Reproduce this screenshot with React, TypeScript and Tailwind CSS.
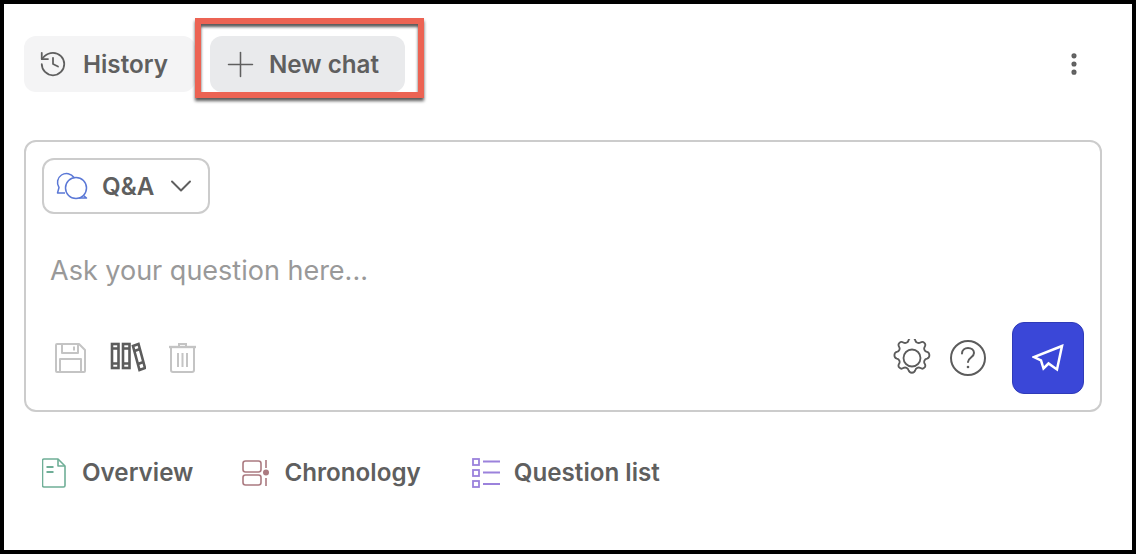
import { ChevronDown, EllipsisVertical, History, Plus } from 'lucide-react';

function SaveIcon() {
  return (
    <svg width="31" height="32" viewBox="0 0 31 32" fill="none" stroke="#c4c4c4" strokeWidth="2" strokeLinejoin="round">
      <path d="M2 2h22l6 6v21a1 1 0 0 1-1 1H2a1 1 0 0 1-1-1V3a1 1 0 0 1 1-1z" />
      <path d="M7 2v9h16V2M19 4.500v4" />
      <path d="M5 30V17h21v13" />
    </svg>
  );
}

function BooksIcon() {
  return (
    <svg width="36" height="32" viewBox="0 0 36 32" fill="none" stroke="#5c5c5c" strokeWidth="2.600">
      <rect x="2" y="2" width="6.500" height="24" />
      <rect x="13" y="2" width="6.500" height="24" />
      <path d="M2 6.500h6.500M2 21.500h6.500M13 6.500h6.500M13 21.500h6.500" />
      <path d="M23 4l5.500-2 6.500 24-5.500 2z" />
      <path d="M24.500 9l5.500-2M28 22l5.500-2" />
    </svg>
  );
}

function TrashIcon() {
  return (
    <svg width="30" height="32" viewBox="0 0 30 32" fill="none" stroke="#c4c4c4" strokeWidth="2">
      <path d="M1 5h27" strokeWidth="2.400" />
      <path d="M11 4V2h7v2" />
      <path d="M3 6v22a2 2 0 0 0 2 2h19a2 2 0 0 0 2-2V6" />
      <path d="M10 11v14M14.500 11v14M19 11v14" />
    </svg>
  );
}

function GearIcon() {
  return (
    <svg width="38" height="38" viewBox="2.600 2.600 18.800 18.800" fill="none" stroke="#5c5c5c" strokeWidth="0.900" strokeLinejoin="round">
      <path d="M10.300 3.200c.4-1.600 2.900-1.600 3.300 0a1.700 1.700 0 0 0 2.600 1.100c1.400-.9 3 .7 2.100 2.100a1.700 1.700 0 0 0 1.100 2.600c1.600.4 1.600 2.900 0 3.300a1.700 1.700 0 0 0-1.100 2.600c.9 1.400-.7 3-2.100 2.100a1.700 1.700 0 0 0-2.600 1.100c-.4 1.600-2.900 1.600-3.300 0a1.700 1.700 0 0 0-2.600-1.100c-1.400.9-3-.7-2.100-2.100a1.700 1.700 0 0 0-1.100-2.600c-1.600-.4-1.600-2.900 0-3.300a1.700 1.700 0 0 0 1.100-2.600c-.9-1.400.7-3 2.100-2.100a1.700 1.700 0 0 0 2.600-1.100z" />
      <circle cx="12" cy="12" r="4.200" />
    </svg>
  );
}

function HelpIcon() {
  return (
    <svg width="38" height="38" viewBox="0 0 38 38" fill="none" stroke="#5c5c5c" strokeWidth="2">
      <circle cx="19" cy="19" r="17" />
      <path d="M13 14.500c0-3.500 2.800-5.500 6-5.500s6 2 6 5c0 4.500-6 4.500-6 9" strokeLinecap="round" />
      <circle cx="19" cy="28" r="1.300" fill="#5c5c5c" stroke="none" />
    </svg>
  );
}

function SendIcon() {
  return (
    <svg width="32" height="28" viewBox="0 0 32 28" fill="none" stroke="#ffffff" strokeWidth="2.500" strokeLinejoin="miter">
      <path d="M30 2L2 13l7 3.500 2.500 8 5-5 8.500 6z" />
    </svg>
  );
}

function ChatsIcon() {
  return (
    <svg width="32" height="28" viewBox="0 0 32 28" fill="none" stroke="#5b78d6" strokeWidth="1.500" strokeLinejoin="round">
      <path d="M18 5.500A9 9 0 0 0 3 15.500L1.500 21H9" />
      <circle cx="20" cy="16" r="10.500" />
      <path d="M27.500 23.500L30.500 26H23" />
    </svg>
  );
}

function OverviewIcon() {
  return (
    <svg width="24" height="30" viewBox="0 0 24 30" fill="none" stroke="#6fae97" strokeWidth="1.600" strokeLinejoin="round">
      <path d="M2 1h14l7 7v19.500a1.500 1.500 0 0 1-1.500 1.500H2a1.500 1.500 0 0 1-1.500-1.500v-25A1.500 1.500 0 0 1 2 1z" />
      <path d="M16 1v7h7" />
      <path d="M4.500 9h7M4.500 14h7" strokeWidth="1.800" />
    </svg>
  );
}

function ChronologyIcon() {
  return (
    <svg width="28" height="26" viewBox="0 0 28 26" fill="none" stroke="#ab7a80" strokeWidth="1.600">
      <rect x="1" y="1" width="18" height="11" rx="2.500" />
      <rect x="1" y="15" width="18" height="10" rx="2.500" />
      <path d="M24 0v8M24 18v8" />
      <circle cx="24" cy="12.500" r="3" fill="#ab7a80" stroke="none" />
    </svg>
  );
}

function ListIcon() {
  return (
    <svg width="29" height="30" viewBox="0 0 29 30" fill="none" stroke="#9b82dc" strokeWidth="1.800">
      <rect x="1" y="1" width="6" height="6" />
      <rect x="1" y="12" width="6" height="6" />
      <rect x="1" y="23" width="6" height="6" />
      <path d="M11 3.500h17M11 14.500h17M11 26h17" />
    </svg>
  );
}

function TabLink({ icon, label, className }: { icon: React.ReactNode; label: string; className: string }) {
  return (
    <div className={`flex items-center ${className}`}>
      {icon}
      <span className="text-[24.2px] font-semibold">{label}</span>
    </div>
  );
}

export default function App() {
  return (
    <div className="h-[554px] w-[1136px] border-4 border-black bg-white font-['Inter',sans-serif] text-[#5f5f5f]">
      <div className="relative px-5 pt-8">
        {/* Top bar */}
        <div className="flex h-14 items-center">
          <button className="flex h-14 w-[171px] items-center gap-[15px] rounded-xl bg-[#f4f4f5] pl-3.5 text-[24.2px] font-semibold">
            <History size={30} strokeWidth={1.4} />
            <span className="pt-0.5">History</span>
          </button>
          <button className="ml-[15px] flex h-14 w-[195px] items-center gap-2 rounded-xl bg-[#e9eaec] pl-2.5 text-[24.2px] font-semibold">
            <Plus size={41} strokeWidth={0.9} />
            <span className="pt-0.5">New chat</span>
          </button>
          <EllipsisVertical className="ml-auto mr-6" size={28} strokeWidth={2.4} />
        </div>

        {/* Highlight */}
        <div className="absolute left-[191px] top-[14px] h-[80px] w-[229px] border-[6px] border-[#ec6353] shadow-[0_3px_3px_rgba(0,0,0,0.65),inset_0_3px_3px_rgba(0,0,0,0.65)]" />

        {/* Question box */}
        <div className="mt-12 h-[272px] w-[1078px] rounded-xl border-2 border-[#cccccc] px-4 pt-4">
          <div className="flex h-14 w-[168px] items-center rounded-xl border-2 border-[#cccccc] pl-3 text-[24.2px] font-semibold">
            <ChatsIcon />
            <span className="ml-3.5 pt-0.5">Q&amp;A</span>
            <ChevronDown className="ml-[9px] shrink-0" size={36} strokeWidth={1.3} />
          </div>
          <div className="mt-[41px] pl-2 text-[27px] leading-8 text-[#999999]">Ask your question here...</div>
          <div className="mt-[35px] flex h-[72px] items-center">
            <div className="flex items-center pl-[13px]">
              <SaveIcon />
              <div className="ml-6"><BooksIcon /></div>
              <div className="ml-[22px]"><TrashIcon /></div>
            </div>
            <div className="ml-auto flex items-center">
              <GearIcon />
              <div className="ml-[18px]"><HelpIcon /></div>
              <button className="ml-[25px] flex h-[72px] w-[72px] items-center justify-center rounded-xl border border-[#2f3bb8] bg-[#3a47d8]">
                <SendIcon />
              </button>
            </div>
          </div>
        </div>

        {/* Tabs */}
        <div className="mt-[43px] flex items-center pl-[18px]">
          <TabLink icon={<OverviewIcon />} label="Overview" className="gap-4" />
          <TabLink icon={<ChronologyIcon />} label="Chronology" className="ml-[49px] gap-[14px]" />
          <TabLink icon={<ListIcon />} label="Question list" className="ml-[51px] gap-[13px]" />
        </div>
      </div>
    </div>
  );
}
